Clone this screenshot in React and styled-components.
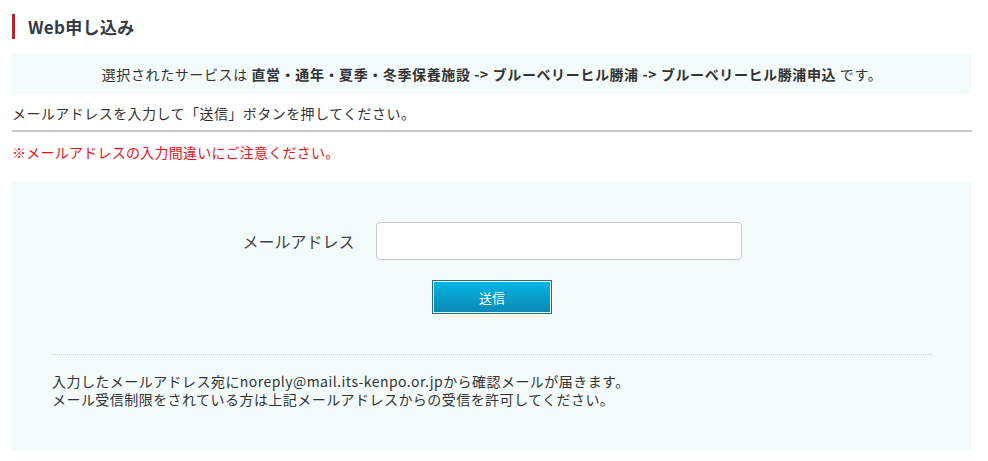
import styled, { createGlobalStyle } from 'styled-components'

const GlobalStyle = createGlobalStyle`
  body {
    margin: 0;
    background: #fff;
    font-family: 'Noto Sans CJK JP', 'Liberation Sans', sans-serif;
    color: #333;
  }
`

const Page = styled.div`
  padding: 14px 16px 0 12px;
  width: 960px;
`

const Title = styled.h2`
  margin: 0;
  height: 25px;
  line-height: 25px;
  border-left: 3px solid #b3272a;
  padding-left: 13px;
  font-size: 17px;
  font-weight: 700;
  letter-spacing: 0.3px;
  color: #333c46;
`

const ServiceBox = styled.div`
  margin-top: 15px;
  height: 40px;
  line-height: 40px;
  background: #f3fbfb;
  text-align: center;
  font-size: 14px;
  letter-spacing: 0.6px;
  color: #333;

  b {
    font-weight: 700;
  }
`

const Lead = styled.p`
  margin: 0;
  padding: 9px 0 7px;
  line-height: 20px;
  font-size: 14px;
  letter-spacing: 0.45px;
  color: #333;
  border-bottom: 2px solid #c8c8c8;
`

const Warning = styled.p`
  margin: 10px 0 0;
  line-height: 20px;
  font-size: 14px;
  letter-spacing: 0.25px;
  color: #e5121b;
`

const Panel = styled.div`
  margin-top: 20px;
  background: #f4fbfb;
  padding: 40px 40px 42px;
`

const FieldRow = styled.div`
  display: flex;
  align-items: center;
  justify-content: center;
  gap: 21px;
`

const Label = styled.label`
  font-size: 16px;
  color: #444;
  line-height: 20px;
`

const Input = styled.input`
  box-sizing: border-box;
  width: 366px;
  height: 38px;
  border: 1px solid #c9c9c9;
  border-radius: 4px;
  background: #fff;
  outline: none;
  font-size: 14px;
  padding: 0 8px;
`

const ButtonRow = styled.div`
  display: flex;
  justify-content: center;
  margin-top: 20px;
`

const SubmitButton = styled.button`
  box-sizing: border-box;
  width: 120px;
  height: 34px;
  border: 1px solid #16708f;
  box-shadow: inset 0 0 0 1px #fff;
  background: linear-gradient(#03b6e2, #0a89b3);
  color: #fff;
  font-family: inherit;
  font-size: 13px;
  cursor: pointer;
`

const Notes = styled.div`
  margin-top: 40px;
  border-top: 1px dotted #cfcfcf;
  padding-top: 17px;
  font-size: 14px;
  line-height: 18px;
  letter-spacing: 0.45px;
  color: #333;
`

export default function App() {
  return (
    <>
      <GlobalStyle />
      <Page>
        <Title>Web申し込み</Title>
        <ServiceBox>
          選択されたサービスは <b>直営・通年・夏季・冬季保養施設 -&gt; ブルーベリーヒル勝浦 -&gt; ブルーベリーヒル勝浦申込</b> です。
        </ServiceBox>
        <Lead>メールアドレスを入力して「送信」ボタンを押してください。</Lead>
        <Warning>※メールアドレスの入力間違いにご注意ください。</Warning>
        <Panel>
          <FieldRow>
            <Label htmlFor="mail">メールアドレス</Label>
            <Input id="mail" type="email" />
          </FieldRow>
          <ButtonRow>
            <SubmitButton type="button">送信</SubmitButton>
          </ButtonRow>
          <Notes>
            入力したメールアドレス宛にnoreply@mail.its-kenpo.or.jpから確認メールが届きます。
            <br />
            メール受信制限をされている方は上記メールアドレスからの受信を許可してください。
          </Notes>
        </Panel>
      </Page>
    </>
  )
}
